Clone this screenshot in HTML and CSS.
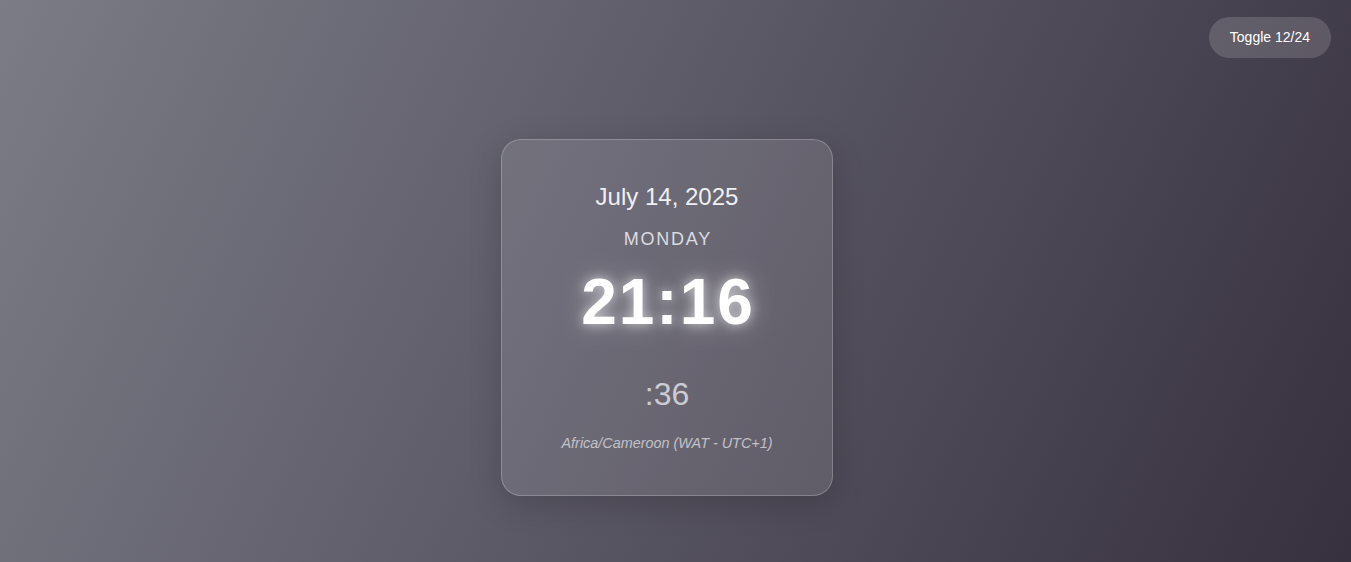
FILE: index.html
```html
<!DOCTYPE html>
<html lang="en">
<head>
<meta charset="utf-8">
<title>Clock</title>
<link rel="stylesheet" href="styles.css">
</head>
<body>
<button class="toggle">Toggle 12/24</button>
<main class="stage">
  <section class="card">
    <div class="date">July 14, 2025</div>
    <div class="day">MONDAY</div>
    <div class="time">21:16</div>
    <div class="seconds">:36</div>
    <div class="zone">Africa/Cameroon (WAT - UTC+1)</div>
  </section>
</main>
</body>
</html>
```
FILE: styles.css
```css
html, body {
  margin: 0;
  height: 100%;
}
body {
  font-family: "Liberation Sans", Arial, sans-serif;
  background: linear-gradient(115deg, #7b7c86 0%, #5d5b68 45%, #37303e 100%);
  color: #fff;
  overflow: hidden;
  position: relative;
}
.toggle {
  position: absolute;
  top: 17px;
  right: 20px;
  height: 41px;
  padding: 0 21px;
  border: none;
  border-radius: 999px;
  background: rgba(255, 255, 255, 0.15);
  color: #fff;
  font-family: "Liberation Sans", Arial, sans-serif;
  font-size: 14px;
  line-height: 39px;
}
.stage {
  display: flex;
  justify-content: center;
  padding: 139px 17px 0 0;
}
.card {
  width: 332px;
  box-sizing: border-box;
  padding: 43px 0 44px;
  border: 1px solid rgba(255, 255, 255, 0.22);
  border-radius: 20px;
  background: rgba(255, 255, 255, 0.1);
  box-shadow: 0 8px 32px rgba(0, 0, 0, 0.18);
  display: flex;
  flex-direction: column;
  align-items: center;
  text-align: center;
}
.date {
  font-size: 24px;
  color: #f0eff2;
  line-height: 28px;
}
.day {
  margin-top: 18px;
  font-size: 18px;
  line-height: 20px;
  letter-spacing: 0.1em;
  padding-left: 0.1em;
  color: #dcdbe0;
}
.time {
  margin-top: 16px;
  font-size: 64px;
  line-height: 74px;
  font-weight: 700;
  letter-spacing: 2px;
  padding-left: 2px;
  color: #fff;
  text-shadow: 0 0 12px rgba(255, 255, 255, 0.65), 0 0 30px rgba(255, 255, 255, 0.4);
}
.seconds {
  margin-top: 37px;
  font-size: 32px;
  line-height: 37px;
  color: #cdccd2;
}
.zone {
  margin-top: 22px;
  font-size: 14.4px;
  line-height: 16px;
  font-style: italic;
  color: #c2c1c8;
}
```
